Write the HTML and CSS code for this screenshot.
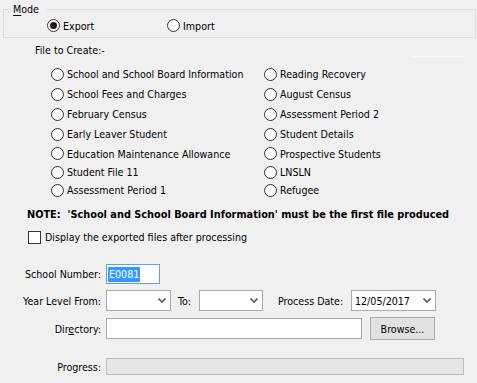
FILE: index.html
```html
<!DOCTYPE html>
<html>
<head>
<meta charset="utf-8">
<link rel="stylesheet" href="styles.css">
</head>
<body>
<div class="page">
  <fieldset class="mode">
    <legend class="mode-legend"><u>M</u>ode</legend>
    <div class="mode-row">
      <label class="radio mode-export"><span class="circle checked"></span>Export</label>
      <label class="radio"><span class="circle"></span>Import</label>
    </div>
  </fieldset>

  <div class="file-head">
    <span class="file-label">File to Create:-</span>
    <span class="ghost-line"></span>
  </div>

  <div class="files">
    <label class="radio"><span class="circle"></span>School and School Board Information</label>
    <label class="radio"><span class="circle"></span>Reading Recovery</label>
    <label class="radio"><span class="circle"></span>School Fees and Charges</label>
    <label class="radio"><span class="circle"></span>August Census</label>
    <label class="radio"><span class="circle"></span>February Census</label>
    <label class="radio"><span class="circle"></span>Assessment Period 2</label>
    <label class="radio"><span class="circle"></span>Early Leaver Student</label>
    <label class="radio"><span class="circle"></span>Student Details</label>
    <label class="radio"><span class="circle"></span>Education Maintenance Allowance</label>
    <label class="radio"><span class="circle"></span>Prospective Students</label>
    <label class="radio"><span class="circle"></span>Student File 11</label>
    <label class="radio"><span class="circle"></span>LNSLN</label>
    <label class="radio"><span class="circle"></span>Assessment Period 1</label>
    <label class="radio"><span class="circle"></span>Refugee</label>
  </div>

  <div class="note">NOTE:&nbsp; 'School and School Board Information' must be the first file produced</div>

  <label class="check-row"><span class="checkbox"></span>Display the exported files after processing</label>

  <div class="form">
    <div class="row row-school">
      <span class="lbl">School Number:</span>
      <div class="input input-school"><span class="sel-text">E0081</span></div>
    </div>
    <div class="row row-year">
      <span class="lbl">Year Level From:</span>
      <div class="select select-from">
        <span class="select-val"></span>
        <svg class="chev" width="8" height="5" viewBox="0 0 8 5"><polyline points="0.5,0.5 4,4 7.5,0.5" fill="none" stroke="#5a5a5a" stroke-width="1.6"/></svg>
      </div>
      <span class="lbl-inline lbl-to">To:</span>
      <div class="select select-to">
        <span class="select-val"></span>
        <svg class="chev" width="8" height="5" viewBox="0 0 8 5"><polyline points="0.5,0.5 4,4 7.5,0.5" fill="none" stroke="#5a5a5a" stroke-width="1.6"/></svg>
      </div>
      <span class="lbl-inline lbl-date">Process Date:</span>
      <div class="select select-date">
        <span class="select-val">12/05/2017</span>
        <svg class="chev" width="8" height="5" viewBox="0 0 8 5"><polyline points="0.5,0.5 4,4 7.5,0.5" fill="none" stroke="#5a5a5a" stroke-width="1.6"/></svg>
      </div>
    </div>
    <div class="row row-dir">
      <span class="lbl">Dir<u class="acc">e</u>ctory:</span>
      <div class="input input-dir"></div>
      <button class="btn">Browse...</button>
    </div>
    <div class="row row-progress">
      <span class="lbl">Progress:</span>
      <div class="progress"></div>
    </div>
  </div>
</div>
</body>
</html>
```

FILE: styles.css
```css
html, body {
  margin: 0;
  padding: 0;
  background: #f0f0f0;
}
body {
  font-family: "DejaVu Sans Condensed", "DejaVu Sans", sans-serif;
  font-stretch: condensed;
  font-size: 10.6px;
  color: #000;
  width: 477px;
  height: 383px;
  overflow: hidden;
}
.page {
  padding: 2px 1px 0 3px;
}

/* Mode group box */
.mode {
  margin: 0;
  padding: 0 0 0 7px;
  border: 1px solid #dcdcdc;
}
.mode-legend {
  padding: 0 8px 0 2px;
  line-height: 14px;
  height: 14px;
}
.mode-legend u {
  text-decoration-thickness: 1px;
  text-underline-offset: 2px;
}
.mode-row {
  display: flex;
  align-items: flex-start;
  height: 18px;
  padding-top: 3px;
  padding-left: 36px;
}
.mode-row .radio {
  height: 13px;
}
.mode-export {
  width: 120px;
}

/* radios */
.radio {
  display: flex;
  align-items: center;
  gap: 3px;
  white-space: nowrap;
}
.circle {
  box-sizing: border-box;
  width: 13px;
  height: 13px;
  border: 1px solid #333;
  border-radius: 50%;
  background: #fff;
  flex: none;
  display: flex;
  align-items: center;
  justify-content: center;
}
.circle.checked::after {
  content: "";
  width: 7px;
  height: 7px;
  border-radius: 50%;
  background: #1a1a1a;
}

/* file list */
.file-head {
  display: flex;
  align-items: flex-end;
  margin-top: 5px;
  height: 14px;
  line-height: 14px;
}
.file-label {
  margin-left: 32px;
  align-self: center;
}
.ghost-line {
  margin-left: auto;
  margin-right: 11px;
  width: 53px;
  height: 1px;
  background: #f8f8f8;
}
.files {
  margin-top: 7px;
  padding-left: 48px;
  display: grid;
  grid-template-columns: 213px auto;
  grid-template-rows: 20px 20px 20px 20px 19px 18px 18px;
}

.note {
  margin-top: 8px;
  padding-left: 24px;
  font-weight: bold;
  font-size: 10.85px;
  line-height: 16px;
  height: 16px;
  white-space: nowrap;
}

.check-row {
  display: flex;
  align-items: center;
  gap: 4px;
  margin-top: 6px;
  padding-left: 25px;
  height: 16px;
}
.checkbox {
  box-sizing: border-box;
  width: 13px;
  height: 13px;
  border: 1px solid #333;
  background: #fff;
  flex: none;
}

/* form */
.form {
  margin-top: 19px;
}
.row {
  display: flex;
  align-items: center;
}
.lbl {
  width: 98px;
  text-align: right;
  margin-right: 5px;
  flex: none;
  white-space: nowrap;
}
.acc {
  text-decoration-thickness: 1px;
}
.input {
  box-sizing: border-box;
  background: #fff;
  border: 1px solid #a9a9a9;
  display: flex;
  align-items: center;
}
.row-school {
  height: 20px;
}
.input-school {
  width: 54px;
  height: 20px;
  border-color: #5ea1e6;
  padding-left: 1px;
}
.sel-text {
  background: #3399ff;
  color: #fff;
  line-height: 15px;
  padding: 0 1px;
}

.row-year {
  margin-top: 6px;
  height: 21px;
}
.select {
  box-sizing: border-box;
  height: 21px;
  background: #fff;
  border: 1px solid #a9a9a9;
  display: flex;
  align-items: center;
  padding: 0 4px 0 3px;
  flex: none;
}
.select-val {
  flex: 1;
}
.chev {
  flex: none;
}
.select-from { width: 65px; }
.select-to { width: 64px; }
.select-date { width: 85px; }
.lbl-inline {
  flex: none;
  white-space: nowrap;
}
.lbl-to {
  width: 16px;
  margin-left: 7px;
  margin-right: 5px;
}
.lbl-date {
  width: 67px;
  margin-left: 15px;
  margin-right: 6px;
}

.row-dir {
  margin-top: 6px;
  height: 23px;
}
.input-dir {
  width: 256px;
  height: 21px;
}
.btn {
  margin: 0 0 0 8px;
  box-sizing: border-box;
  width: 65px;
  height: 23px;
  background: #e1e1e1;
  border: 1px solid #adadad;
  font: inherit;
  color: #000;
  padding: 0;
}

.row-progress {
  margin-top: 18px;
  height: 17px;
}
.progress {
  box-sizing: border-box;
  width: 358px;
  height: 17px;
  background: #e6e6e6;
  border: 1px solid #bcbcbc;
}
```
